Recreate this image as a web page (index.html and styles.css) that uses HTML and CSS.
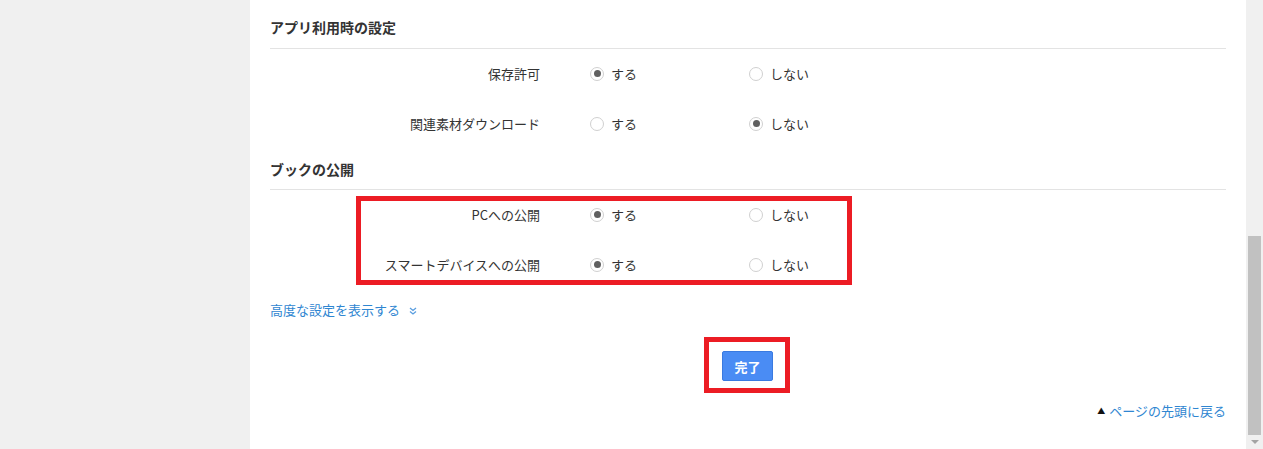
FILE: index.html
```html
<!DOCTYPE html>
<html lang="ja">
<head>
<meta charset="utf-8">
<title>設定</title>
<link rel="stylesheet" href="styles.css">
</head>
<body>
<div class="page">
  <div class="side"></div>
  <main class="main">
    <h2 class="sec-title first">アプリ利用時の設定</h2>
    <div class="rows">
      <div class="row">
        <div class="label">保存許可</div>
        <div class="opt"><span class="radio on"></span>する</div>
        <div class="opt"><span class="radio"></span>しない</div>
      </div>
      <div class="row">
        <div class="label">関連素材ダウンロード</div>
        <div class="opt"><span class="radio"></span>する</div>
        <div class="opt"><span class="radio on"></span>しない</div>
      </div>
    </div>
    <h2 class="sec-title">ブックの公開</h2>
    <div class="rows marked">
      <div class="row">
        <div class="label">PCへの公開</div>
        <div class="opt"><span class="radio on"></span>する</div>
        <div class="opt"><span class="radio"></span>しない</div>
      </div>
      <div class="row">
        <div class="label">スマートデバイスへの公開</div>
        <div class="opt"><span class="radio on"></span>する</div>
        <div class="opt"><span class="radio"></span>しない</div>
      </div>
      <div class="mark-box"></div>
    </div>
    <a class="more" href="#">高度な設定を表示する<svg class="chev" width="8" height="8" viewBox="0 0 8 8"><path d="M1 1 L4 3.5 L7 1 M1 4.5 L4 7 L7 4.5" fill="none" stroke="#5a9ee0" stroke-width="1.3"/></svg></a>
    <div class="actions">
      <div class="btn-mark"><button class="btn" type="button">完了</button></div>
    </div>
    <div class="back"><a href="#"><span class="tri">▲</span>ページの先頭に戻る</a></div>
  </main>
  <div class="scrollbar">
    <div class="thumb"></div>
    <div class="arrow"></div>
  </div>
</div>
</body>
</html>
```
FILE: styles.css
```css
html, body {
  margin: 0;
  padding: 0;
  height: 449px;
  overflow: hidden;
}
body {
  font-family: "Noto Sans CJK JP", "Liberation Sans", sans-serif;
  font-size: 13px;
  color: #333;
  background: #f0f0f0;
}
.page {
  display: flex;
  height: 449px;
}
.side {
  width: 250px;
  flex: none;
  background: #f0f0f0;
}
.main {
  width: 956px;
  flex: none;
  background: #fff;
  padding: 0 20px;
}
.sec-title {
  margin: 0;
  font-size: 14px;
  font-weight: bold;
  line-height: 20px;
  padding: 10px 0 10px;
  border-bottom: 1px solid #e3e3e3;
  color: #333;
}
.sec-title.first {
  padding-top: 17px;
  padding-bottom: 11px;
}
.rows {
  position: relative;
}
.row {
  display: flex;
  align-items: center;
  height: 50px;
  line-height: 20px;
  padding-bottom: 1px;
  box-sizing: border-box;
}
.label {
  width: 270px;
  text-align: right;
  padding-right: 50px;
  flex: none;
}
.opt {
  width: 159px;
  display: flex;
  align-items: center;
  flex: none;
}
.radio {
  width: 12px;
  height: 12px;
  border: 1px solid #d0d0d0;
  border-radius: 50%;
  margin-right: 7px;
  display: inline-flex;
  align-items: center;
  justify-content: center;
  box-sizing: content-box;
  background: #fff;
}
.radio.on::after {
  content: "";
  width: 7px;
  height: 7px;
  border-radius: 50%;
  background: #606060;
}
.mark-box {
  position: absolute;
  left: 86px;
  top: 6px;
  width: 486px;
  height: 79px;
  border: 5px solid #ec1c24;
}
.more {
  display: flex;
  align-items: center;
  margin-top: 10px;
  line-height: 20px;
  color: #2f86d1;
  text-decoration: none;
  width: max-content;
}
.chev {
  margin-left: 9px;
  margin-top: 1px;
}
.actions {
  display: flex;
  justify-content: center;
  margin-top: 17px;
  padding-right: 2px;
}
.btn-mark {
  border: 5px solid #ec1c24;
  padding: 9px 12px 7px 13px;
  display: flex;
}
.btn {
  width: 51px;
  height: 30px;
  background: #4a8cf4;
  border: 1px solid #3a7ae0;
  border-radius: 2px;
  color: #fff;
  font-family: "Noto Sans CJK JP", sans-serif;
  font-weight: bold;
  font-size: 13px;
  padding: 0;
}
.back {
  margin-top: 8px;
  text-align: right;
  line-height: 20px;
}
.back a {
  color: #2f86d1;
  text-decoration: none;
}
.tri {
  color: #111;
  font-size: 8px;
  margin-right: 4px;
  vertical-align: 2px;
}
.scrollbar {
  width: 17px;
  flex: none;
  background: #f0f0f0;
  padding-top: 236px;
  box-sizing: border-box;
  display: flex;
  flex-direction: column;
  align-items: center;
}
.thumb {
  width: 13px;
  height: 199px;
  background: #c1c1c1;
}
.arrow {
  margin-top: 5px;
  width: 0;
  height: 0;
  border-left: 4px solid transparent;
  border-right: 4px solid transparent;
  border-top: 4px solid #a3a3a3;
}
```
